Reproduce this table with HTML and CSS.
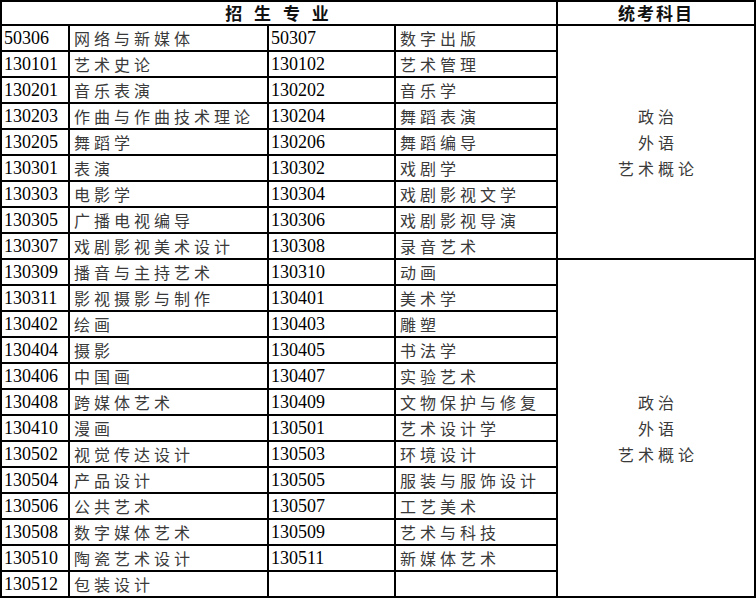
FILE: index.html
```html
<!DOCTYPE html>
<html lang="zh-CN">
<head>
<meta charset="utf-8">
<title>招生专业</title>
<link rel="stylesheet" href="styles.css">
</head>
<body>
<table class="majors">
  <colgroup>
    <col class="c-code1">
    <col class="c-name1">
    <col class="c-code2">
    <col class="c-name2">
    <col class="c-subj">
  </colgroup>
  <thead>
    <tr>
      <th class="head head-main" colspan="4">招 生 专 业</th>
      <th class="head head-subj">统考科目</th>
    </tr>
  </thead>
  <tbody>
    <tr><td class="code">50306</td><td class="name">网络与新媒体</td><td class="code">50307</td><td class="name">数字出版</td>
      <td class="subj" rowspan="9">政治<br>外语<br>艺术概论</td></tr>
    <tr><td class="code">130101</td><td class="name">艺术史论</td><td class="code">130102</td><td class="name">艺术管理</td></tr>
    <tr><td class="code">130201</td><td class="name">音乐表演</td><td class="code">130202</td><td class="name">音乐学</td></tr>
    <tr><td class="code">130203</td><td class="name">作曲与作曲技术理论</td><td class="code">130204</td><td class="name">舞蹈表演</td></tr>
    <tr><td class="code">130205</td><td class="name">舞蹈学</td><td class="code">130206</td><td class="name">舞蹈编导</td></tr>
    <tr><td class="code">130301</td><td class="name">表演</td><td class="code">130302</td><td class="name">戏剧学</td></tr>
    <tr><td class="code">130303</td><td class="name">电影学</td><td class="code">130304</td><td class="name">戏剧影视文学</td></tr>
    <tr><td class="code">130305</td><td class="name">广播电视编导</td><td class="code">130306</td><td class="name">戏剧影视导演</td></tr>
    <tr><td class="code">130307</td><td class="name">戏剧影视美术设计</td><td class="code">130308</td><td class="name">录音艺术</td></tr>
    <tr><td class="code">130309</td><td class="name">播音与主持艺术</td><td class="code">130310</td><td class="name">动画</td>
      <td class="subj" rowspan="13">政治<br>外语<br>艺术概论</td></tr>
    <tr><td class="code">130311</td><td class="name">影视摄影与制作</td><td class="code">130401</td><td class="name">美术学</td></tr>
    <tr><td class="code">130402</td><td class="name">绘画</td><td class="code">130403</td><td class="name">雕塑</td></tr>
    <tr><td class="code">130404</td><td class="name">摄影</td><td class="code">130405</td><td class="name">书法学</td></tr>
    <tr><td class="code">130406</td><td class="name">中国画</td><td class="code">130407</td><td class="name">实验艺术</td></tr>
    <tr><td class="code">130408</td><td class="name">跨媒体艺术</td><td class="code">130409</td><td class="name">文物保护与修复</td></tr>
    <tr><td class="code">130410</td><td class="name">漫画</td><td class="code">130501</td><td class="name">艺术设计学</td></tr>
    <tr><td class="code">130502</td><td class="name">视觉传达设计</td><td class="code">130503</td><td class="name">环境设计</td></tr>
    <tr><td class="code">130504</td><td class="name">产品设计</td><td class="code">130505</td><td class="name">服装与服饰设计</td></tr>
    <tr><td class="code">130506</td><td class="name">公共艺术</td><td class="code">130507</td><td class="name">工艺美术</td></tr>
    <tr><td class="code">130508</td><td class="name">数字媒体艺术</td><td class="code">130509</td><td class="name">艺术与科技</td></tr>
    <tr><td class="code">130510</td><td class="name">陶瓷艺术设计</td><td class="code">130511</td><td class="name">新媒体艺术</td></tr>
    <tr><td class="code">130512</td><td class="name">包装设计</td><td class="code"></td><td class="name"></td></tr>
  </tbody>
</table>
</body>
</html>
```
FILE: styles.css
```css
html, body {
  margin: 0;
  padding: 0;
  background: #fff;
}

.majors {
  width: 756px;
  table-layout: fixed;
  border-collapse: separate;
  border-spacing: 0;
  border-top: 2px solid #000;
  border-left: 2px solid #000;
  color: #000;
}

.c-code1 { width: 68px; }
.c-name1 { width: 199px; }
.c-code2 { width: 127px; }
.c-name2 { width: 162px; }
.c-subj  { width: 198px; }

.majors th,
.majors td {
  box-sizing: border-box;
  border-right: 2px solid #000;
  border-bottom: 2px solid #000;
  padding: 0;
  vertical-align: middle;
  white-space: nowrap;
}

.majors td {
  overflow: hidden;
}

.head {
  height: 24px;
  font-family: "Noto Sans CJK SC", "Noto Sans", sans-serif;
  font-weight: 700;
  font-size: 17px;
  line-height: 22px;
  text-align: center;
  color: #111;
}

.head-main {
  letter-spacing: 4px;
  padding-left: 4px;
}

.head-subj {
  letter-spacing: 2px;
  padding-left: 2px;
}

.majors tbody td {
  height: 26px;
}

.code {
  font-family: "Liberation Serif", "Times New Roman", serif;
  font-size: 18px;
  line-height: 22px;
  padding-left: 2px !important;
}

.name {
  font-family: "Noto Sans CJK SC", "Noto Sans", sans-serif;
  font-size: 16px;
  line-height: 22px;
  letter-spacing: 4px;
  color: #3a3a3a;
  padding-left: 4px !important;
}

.subj {
  font-family: "Noto Sans CJK SC", "Noto Sans", sans-serif;
  font-size: 16px;
  line-height: 26px;
  letter-spacing: 4px;
  padding-left: 4px !important;
  text-align: center;
  color: #3a3a3a;
}
```
